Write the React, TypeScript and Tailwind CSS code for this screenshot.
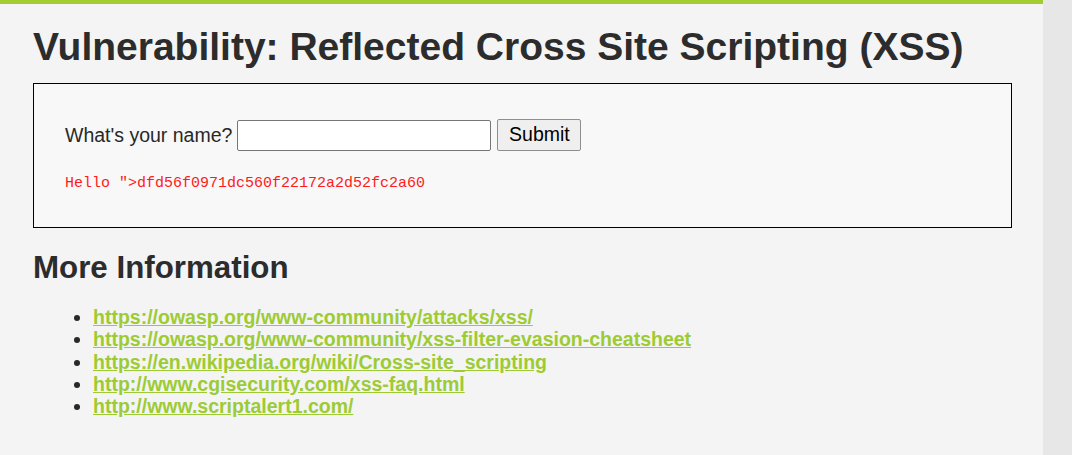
const links = [
  'https://owasp.org/www-community/attacks/xss/',
  'https://owasp.org/www-community/xss-filter-evasion-cheatsheet',
  'https://en.wikipedia.org/wiki/Cross-site_scripting',
  'http://www.cgisecurity.com/xss-faq.html',
  'http://www.scriptalert1.com/',
];

export default function App() {
  return (
    <div className="min-h-[455px] bg-[#e7e7e7] font-['Liberation_Sans',Arial,sans-serif] text-[#282828]">
      <div className="w-[1043px] min-h-[455px] bg-[#f4f4f4] border-t-[4px] border-[#a3cc30]">
        <div className="pl-[33px] pr-[31px]">
          <h1 className="pt-[18px] text-[39px] font-bold leading-[50px] text-[#2c2c2c]">
            Vulnerability: Reflected Cross Site Scripting (XSS)
          </h1>

          {/* form box */}
          <div className="mt-[11px] h-[145px] border border-black bg-[#f7f8f7] pl-[31px] pt-[35px]">
            <form className="flex items-center" onSubmit={(e) => e.preventDefault()}>
              <label className="text-[19.5px] leading-[22px] text-[#282828]">What&apos;s your name?</label>
              <input
                type="text"
                className="ml-[5px] h-[31px] w-[254px] rounded-[2px] border border-[#767676] bg-white"
              />
              <button
                type="submit"
                className="ml-[6px] h-[32px] w-[84px] rounded-[2px] border border-[#8f8f8f] bg-[#efefef] text-[19.5px] text-black"
              >
                Submit
              </button>
            </form>
            <pre className="mt-[22px] font-['Liberation_Mono','Courier_New',monospace] text-[15px] leading-[22px] text-[#ff1a1a]">
              Hello &quot;&gt;dfd56f0971dc560f22172a2d52fc2a60
            </pre>
          </div>

          <h2 className="mt-[22px] text-[31.3px] font-bold leading-[36px] text-[#2c2c2c]">More Information</h2>
          <ul className="mt-[20px] list-disc pl-[60px] marker:text-[#282828]">
            {links.map((href) => (
              <li key={href} className="text-[19.5px] leading-[22.3px]">
                <a href={href} className="font-bold text-[#9dcb34] underline">
                  {href}
                </a>
              </li>
            ))}
          </ul>
        </div>
      </div>
    </div>
  );
}
